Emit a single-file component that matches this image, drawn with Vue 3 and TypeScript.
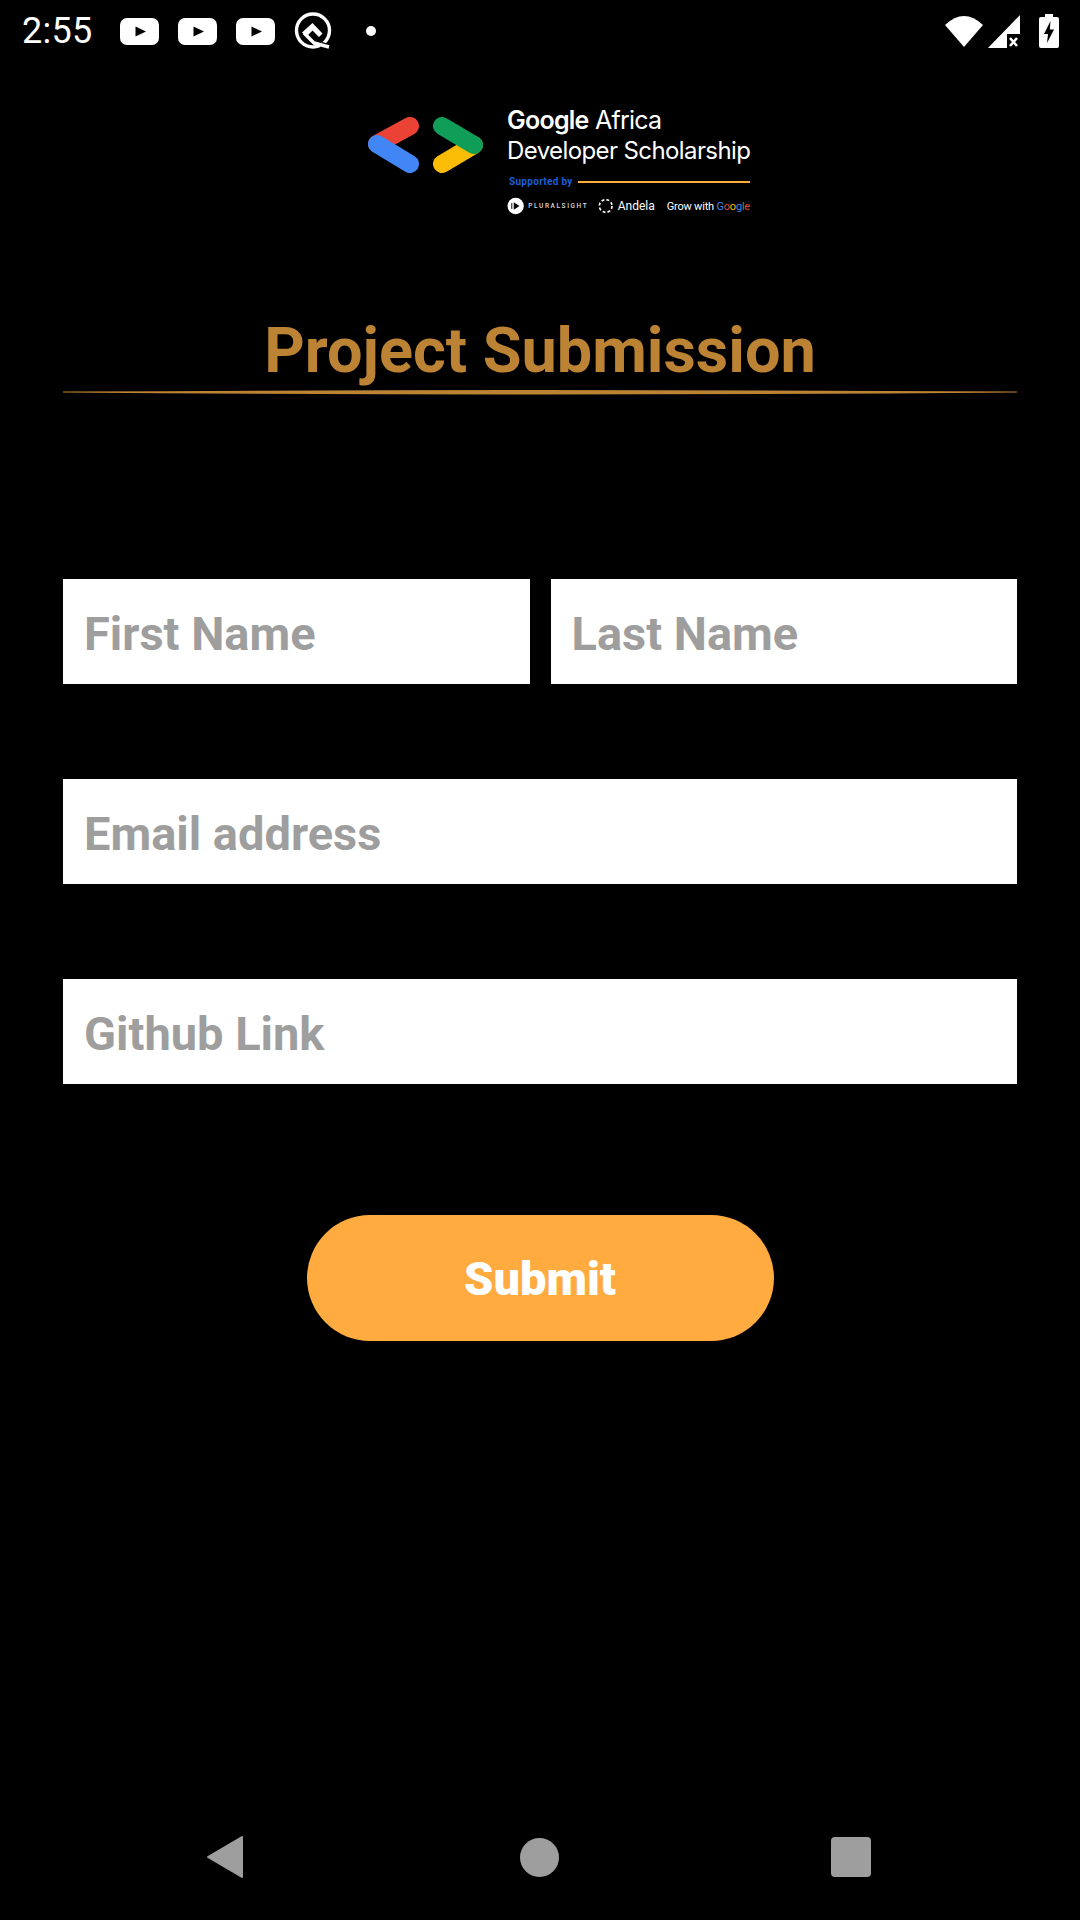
<script setup lang="ts">
const youtubeIcons: number[] = [1, 2, 3]
const googleLetters: { ch: string; color: string }[] = [
  { ch: 'G', color: '#4285f4' },
  { ch: 'o', color: '#ea4335' },
  { ch: 'o', color: '#fbbc05' },
  { ch: 'g', color: '#4285f4' },
  { ch: 'l', color: '#34a853' },
  { ch: 'e', color: '#ea4335' },
]
</script>

<template>
  <div class="screen">
    <header class="status">
      <span class="time">2:55</span>
      <div class="notifs">
        <svg v-for="i in youtubeIcons" :key="i" class="yt" viewBox="0 0 39 27" width="39" height="27">
          <rect width="39" height="27" rx="7" fill="#fff" />
          <path d="M15.5 8.5 L26 13.5 L15.5 18.5 Z" fill="#000" />
        </svg>
        <svg class="q" viewBox="0 0 38 38" width="38" height="38">
          <circle cx="19" cy="18.5" r="16.5" fill="none" stroke="#fff" stroke-width="3.4" />
          <path d="M27 33 L36 37" fill="none" stroke="#000" stroke-width="7" />
          <path d="M10 21 L20 31 L35 35" fill="none" stroke="#fff" stroke-width="3.4" stroke-linejoin="round" />
          <path d="M18.5 11 L28.5 21.5 L25 25 L18.5 18.5 L12.5 24.5 L8 20.5 Z" fill="#fff" />
        </svg>
        <span class="dot"></span>
      </div>
      <div class="sys">
        <svg viewBox="0 0 38 32" width="38" height="32">
          <path d="M0 10 Q19 -8 38 10 L19 32 Z" fill="#fff" />
        </svg>
        <svg class="signal" viewBox="0 0 32 33" width="32" height="33">
          <path d="M0 33 L32 0 L32 19 L19 19 L19 33 Z" fill="#fff" />
          <path d="M22 23 L29 31 M29 23 L22 31" stroke="#fff" stroke-width="2.6" />
        </svg>
        <svg class="battery" viewBox="0 0 20 34" width="20" height="34">
          <path d="M6 0 H14 V3 H18 a2 2 0 0 1 2 2 V32 a2 2 0 0 1 -2 2 H2 a2 2 0 0 1 -2 -2 V5 a2 2 0 0 1 2 -2 H6 Z" fill="#fff" />
          <path d="M11.5 7 L5 20 H9 L8 29 L15 15.5 H10.8 Z" fill="#000" />
        </svg>
      </div>
    </header>

    <div class="logo">
      <svg class="mark" viewBox="0 0 115 56" width="115" height="56">
        <g fill="none" stroke-width="18" stroke-linecap="round">
          <path d="M42 9 L9 27" stroke="#ea4335" />
          <path d="M74 47 L106 28" stroke="#fbbc05" />
          <path d="M9 27 L42 47" stroke="#4285f4" />
          <path d="M74 9 L106 28" stroke="#0f9d58" />
        </g>
      </svg>
      <div class="logo-text">
        <div class="l1"><b>Google</b> Africa</div>
        <div class="l2">Developer Scholarship</div>
        <div class="supported"><span>Supported by</span><i></i></div>
        <div class="partners">
          <svg viewBox="0 0 18 18" width="18" height="18">
            <circle cx="9" cy="9" r="8.5" fill="#fff" />
            <path d="M7 5 L13 9 L7 13 Z" fill="#000" />
            <path d="M5 6 V12" stroke="#000" stroke-width="1" />
          </svg>
          <span class="ps">PLURALSIGHT</span>
          <svg class="andela-icon" viewBox="0 0 16 16" width="16" height="16">
            <circle cx="8" cy="8" r="6.6" fill="none" stroke="#fff" stroke-width="1.7" stroke-dasharray="3 2.18" />
          </svg>
          <span class="andela">Andela</span>
          <span class="grow">Grow with <span v-for="(l, i) in googleLetters" :key="i" :style="{ color: l.color }">{{ l.ch }}</span></span>
        </div>
      </div>
    </div>

    <h1 class="title">Project Submission</h1>
    <svg class="rule" viewBox="0 0 954 5" preserveAspectRatio="none" width="954" height="5">
      <path d="M0 1.6 Q477 -1.4 954 1.6 V2.4 Q477 6.4 0 2.4 Z" fill="#bb8333" />
    </svg>

    <form class="form" @submit.prevent>
      <div class="row">
        <input class="field" placeholder="First Name" />
        <input class="field" placeholder="Last Name" />
      </div>
      <input class="field wide" placeholder="Email address" />
      <input class="field wide" placeholder="Github Link" />
      <button class="submit" type="submit">Submit</button>
    </form>

    <nav class="nav">
      <svg viewBox="0 0 38 44" width="38" height="44">
        <path d="M36 2 V42 L2 22 Z" fill="#9e9e9e" stroke="#9e9e9e" stroke-width="2" stroke-linejoin="round" />
      </svg>
      <span class="home"></span>
      <span class="recent"></span>
    </nav>
  </div>
</template>

<style scoped>
.screen {
  width: 1080px;
  height: 1920px;
  background: #000;
  display: flex;
  flex-direction: column;
  overflow: hidden;
  font-family: Roboto, "Liberation Sans", sans-serif;
  color: #fff;
}
.status {
  height: 62px;
  flex: none;
  display: flex;
  align-items: center;
  padding: 0 21px 0 22px;
}
.time {
  font-size: 36px;
  line-height: 62px;
  letter-spacing: 0.3px;
  width: 98px;
}
.notifs {
  display: flex;
  align-items: center;
  gap: 19px;
}
.dot {
  width: 10px;
  height: 10px;
  border-radius: 50%;
  background: #fff;
  margin-left: 15px;
}
.sys {
  margin-left: auto;
  display: flex;
  align-items: center;
  gap: 5px;
}
.battery { margin-left: 14px; }
.logo {
  flex: none;
  display: flex;
  margin: 46px 0 0 368px;
  height: 120px;
}
.mark { margin-top: 9px; }
.logo-text {
  margin-left: 24px;
  margin-top: -3px;
  width: 243px;
  font-family: Inter, Roboto, sans-serif;
}
.l1, .l2 {
  font-size: 24px;
  line-height: 30px;
  letter-spacing: -0.6px;
  white-space: nowrap;
}
.l1 {
  font-size: 25px;
  letter-spacing: -0.75px;
}
.l1 b { font-weight: 600; }
.l2 { margin-top: 1px; }
.supported {
  display: flex;
  align-items: center;
  gap: 5px;
  margin-top: 10px;
  padding-left: 2px;
  font-family: Roboto, sans-serif;
  font-size: 10px;
  font-weight: 700;
  color: #1a5fd6;
  letter-spacing: 0.3px;
  white-space: nowrap;
}
.supported i {
  flex: 1;
  height: 2px;
  background: #ffab40;
}
.partners {
  display: flex;
  align-items: center;
  margin-top: 10px;
  white-space: nowrap;
  font-family: Roboto, sans-serif;
}
.ps {
  font-size: 6.5px;
  font-weight: 500;
  letter-spacing: 1.6px;
  margin-left: 4px;
  color: #ddd;
}
.andela-icon { margin-left: 10px; }
.andela { font-size: 12px; margin-left: 4px; }
.grow {
  font-size: 11px;
  margin-left: 12px;
  letter-spacing: -0.2px;
}
.title {
  flex: none;
  margin: 86px 0 0;
  text-align: center;
  font-size: 63px;
  line-height: 74px;
  font-weight: 700;
  color: #bb8333;
}
.rule {
  flex: none;
  display: block;
  margin: 2px 0 0 63px;
}
.form {
  flex: none;
  display: flex;
  flex-direction: column;
  gap: 95px;
  margin: 184px 63px 0;
}
.row {
  display: flex;
  gap: 21px;
}
.field {
  flex: 1;
  min-width: 0;
  height: 105px;
  box-sizing: border-box;
  border: 0;
  border-radius: 0;
  outline: 0;
  background: #fff;
  padding: 3px 21px 0;
  font-family: Roboto, sans-serif;
  font-size: 47px;
  font-weight: 700;
  color: #9e9e9e;
}
.field.wide { flex: none; }
.field::placeholder {
  color: #9e9e9e;
  opacity: 1;
}
.submit {
  align-self: center;
  width: 467px;
  height: 126px;
  margin-top: 36px;
  border: 0;
  border-radius: 63px;
  background: #ffab40;
  color: #fff;
  font-family: Roboto, sans-serif;
  font-size: 47px;
  font-weight: 900;
}
.nav {
  flex: none;
  margin-top: auto;
  height: 126px;
  display: flex;
  align-items: center;
  padding-left: 206px;
}
.home {
  width: 39px;
  height: 39px;
  border-radius: 50%;
  background: #9e9e9e;
  margin-left: 276px;
}
.recent {
  width: 40px;
  height: 40px;
  border-radius: 4px;
  background: #9e9e9e;
  margin-left: 272px;
}
</style>
